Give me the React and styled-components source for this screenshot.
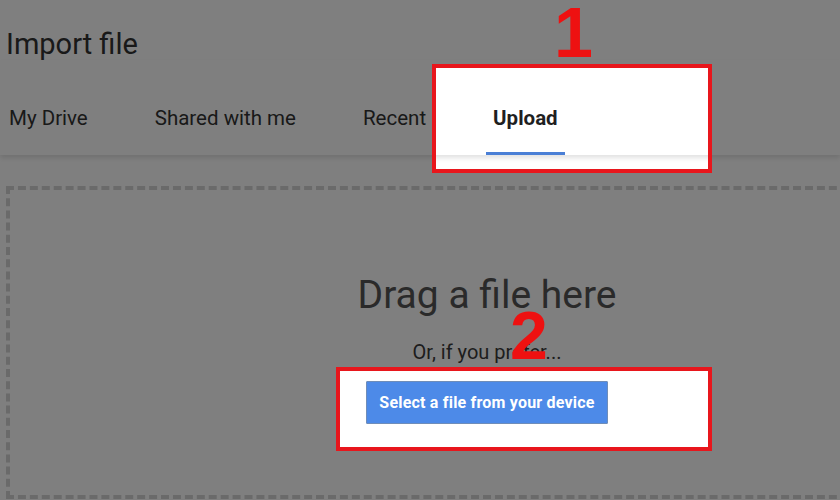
import React from "react";
import styled, { createGlobalStyle } from "styled-components";

const Global = createGlobalStyle`
  html, body { margin: 0; padding: 0; background: #7f7f7f; }
  body { font-family: Roboto, "Liberation Sans", Arial, sans-serif; }
  * { box-sizing: border-box; }
`;

const Page = styled.div`
  position: relative;
  width: 840px;
  height: 500px;
  overflow: hidden;
  background: #ffffff;
  font-family: Roboto, "Liberation Sans", Arial, sans-serif;
`;

const Title = styled.h1`
  margin: 0;
  padding: 28px 0 0 6px;
  font-size: 29px;
  line-height: 32px;
  font-weight: 400;
  color: #333333;
`;

const TabBar = styled.nav`
  display: flex;
  gap: 53px;
  height: 95px;
  padding-left: 2px;
  background: #ffffff;
  box-shadow: 0 3px 5px rgba(0, 0, 0, 0.12);
  position: relative;
`;

const Tab = styled.div`
  display: flex;
  align-items: flex-start;
  padding: 46px 7px 0;
  height: 100%;
  font-size: 20.5px;
  line-height: 24px;
  font-weight: ${(p) => (p.$active ? 700 : 400)};
  color: ${(p) => (p.$active ? "#1f1f1f" : "#333333")};
  border-bottom: 3px solid ${(p) => (p.$active ? "#4a7fd6" : "transparent")};
`;

const DropZone = styled.section`
  margin: 31px 0 0 6px;
  width: 962px;
  height: 313px;
  border: 4px dashed #d4d4d4;
  display: flex;
  flex-direction: column;
  align-items: center;
  padding-top: 82px;
`;

const DropTitle = styled.div`
  font-size: 39px;
  line-height: 46px;
  font-weight: 400;
  color: #555555;
`;

const Hint = styled.div`
  margin-top: 22px;
  font-size: 20px;
  line-height: 24px;
  color: #3a3a3a;
`;

const SelectButton = styled.button`
  margin-top: 17px;
  height: 43px;
  padding: 0 12px;
  border: 1px solid #6f8db8;
  border-radius: 1px;
  background: #4d8ae8;
  color: #ffffff;
  font-family: Roboto, "Liberation Sans", Arial, sans-serif;
  font-size: 16px;
  font-weight: 700;
  letter-spacing: 0.2px;
`;

const Dim = styled.div`
  position: absolute;
  inset: 0;
  background: rgba(0, 0, 0, 0.5);
  clip-path: path(evenodd, "M0 0H840V500H0Z M432 64H712V173H432Z M336 367H712V451H336Z");
  pointer-events: none;
`;

const Callout = styled.div`
  position: absolute;
  left: ${(p) => p.$x}px;
  top: ${(p) => p.$y}px;
  width: ${(p) => p.$w}px;
  height: ${(p) => p.$h}px;
  border: 4px solid #e8161c;
  pointer-events: none;
`;

const StepNumber = styled.div`
  position: absolute;
  left: ${(p) => p.$x}px;
  top: ${(p) => p.$y}px;
  font-family: "Liberation Sans", Arial, sans-serif;
  font-weight: 700;
  font-size: ${(p) => p.$size}px;
  line-height: ${(p) => p.$size}px;
  color: #ee1111;
`;

export default function App() {
  const tabs = ["My Drive", "Shared with me", "Recent", "Upload"];
  return (
    <>
      <Global />
      <Page>
        <Title>Import file</Title>
        <TabBar>
          {tabs.map((t) => (
            <Tab key={t} $active={t === "Upload"}>
              {t}
            </Tab>
          ))}
        </TabBar>
        <DropZone>
          <DropTitle>Drag a file here</DropTitle>
          <Hint>Or, if you prefer...</Hint>
          <SelectButton>Select a file from your device</SelectButton>
        </DropZone>
        <Dim />
        <Callout $x={432} $y={64} $w={280} $h={109} />
        <Callout $x={336} $y={367} $w={376} $h={84} />
        <StepNumber $x={554} $y={-2} $size={70}>1</StepNumber>
        <StepNumber $x={510} $y={301} $size={68}>2</StepNumber>
      </Page>
    </>
  );
}
